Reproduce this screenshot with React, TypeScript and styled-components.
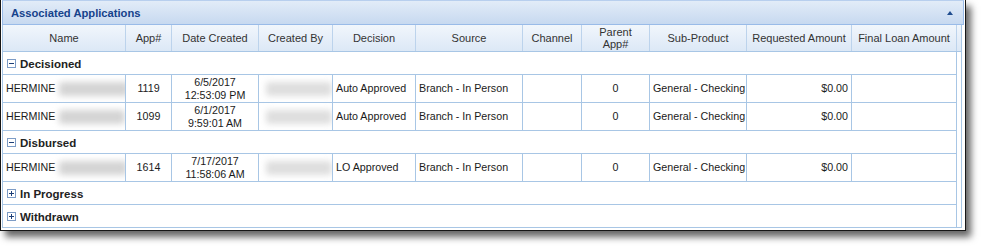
import styled, { createGlobalStyle } from 'styled-components';

type Align = 'left' | 'center' | 'right';

interface Column {
    title: string[];
    width: number;
}

interface AppRow {
    nameBlur: number;
    app: string;
    date: string;
    time: string;
    decision: string;
    source: string;
    parent: string;
    subProduct: string;
    requested: string;
}

interface Group {
    label: string;
    open: boolean;
    rows: AppRow[];
}

const columns: Column[] = [
    { title: ['Name'], width: 123 },
    { title: ['App#'], width: 46 },
    { title: ['Date Created'], width: 87 },
    { title: ['Created By'], width: 74 },
    { title: ['Decision'], width: 83 },
    { title: ['Source'], width: 107 },
    { title: ['Channel'], width: 59 },
    { title: ['Parent', 'App#'], width: 68 },
    { title: ['Sub-Product'], width: 97 },
    { title: ['Requested Amount'], width: 105 },
    { title: ['Final Loan Amount'], width: 105 },
];

const groups: Group[] = [
    {
        label: 'Decisioned',
        open: true,
        rows: [
            { nameBlur: 70, app: '1119', date: '6/5/2017', time: '12:53:09 PM', decision: 'Auto Approved', source: 'Branch - In Person', parent: '0', subProduct: 'General - Checking', requested: '$0.00' },
            { nameBlur: 66, app: '1099', date: '6/1/2017', time: '9:59:01 AM', decision: 'Auto Approved', source: 'Branch - In Person', parent: '0', subProduct: 'General - Checking', requested: '$0.00' },
        ],
    },
    {
        label: 'Disbursed',
        open: true,
        rows: [
            { nameBlur: 68, app: '1614', date: '7/17/2017', time: '11:58:06 AM', decision: 'LO Approved', source: 'Branch - In Person', parent: '0', subProduct: 'General - Checking', requested: '$0.00' },
        ],
    },
    { label: 'In Progress', open: false, rows: [] },
    { label: 'Withdrawn', open: false, rows: [] },
];

const gridTemplate = columns.map((c) => `${c.width}px`).join(' ');

// little +/- box in front of each group
const ToggleIcon = ({ open }: { open: boolean }) => (
    <svg width="9" height="9" viewBox="0 0 9 9">
        <rect x="0.5" y="0.5" width="8" height="8" fill="#fff" stroke="#7d9cc6" />
        <rect x="2" y="4" width="5" height="1" fill="#1d3f78" />
        {!open && <rect x="4" y="2" width="1" height="5" fill="#1d3f78" />}
    </svg>
);

const App = () => {
    return (
        <>
            <GlobalStyle />
            <StyledPage>
                <StyledFrame>
                    <StyledTitleBar>
                        <StyledTitle>Associated Applications</StyledTitle>
                        <StyledCollapse />
                    </StyledTitleBar>
                    <StyledBody>
                        <StyledHeaderRow $template={gridTemplate}>
                            {columns.map((c) => (
                                <StyledHeaderCell key={c.title.join(' ')}>
                                    {c.title.map((t) => (
                                        <span key={t}>{t}</span>
                                    ))}
                                </StyledHeaderCell>
                            ))}
                        </StyledHeaderRow>
                        <StyledRows>
                            {groups.map((g) => (
                                <StyledGroup key={g.label}>
                                    <StyledGroupRow>
                                        <ToggleIcon open={g.open} />
                                        <span>{g.label}</span>
                                    </StyledGroupRow>
                                    {g.rows.map((r) => (
                                        <StyledDataRow key={r.app} $template={gridTemplate}>
                                            <StyledCell $align="left">
                                                HERMINE
                                                <StyledBlur $w={r.nameBlur} />
                                            </StyledCell>
                                            <StyledCell $align="center">{r.app}</StyledCell>
                                            <StyledCell $align="center">
                                                <StyledStack>
                                                    <span>{r.date}</span>
                                                    <span>{r.time}</span>
                                                </StyledStack>
                                            </StyledCell>
                                            <StyledCell $align="left">
                                                <StyledBlur $w={66} $light />
                                            </StyledCell>
                                            <StyledCell $align="left">{r.decision}</StyledCell>
                                            <StyledCell $align="left">{r.source}</StyledCell>
                                            <StyledCell $align="left" />
                                            <StyledCell $align="center">{r.parent}</StyledCell>
                                            <StyledCell $align="left">{r.subProduct}</StyledCell>
                                            <StyledCell $align="right">{r.requested}</StyledCell>
                                            <StyledCell $align="right" />
                                        </StyledDataRow>
                                    ))}
                                </StyledGroup>
                            ))}
                        </StyledRows>
                    </StyledBody>
                </StyledFrame>
            </StyledPage>
        </>
    );
};

const GlobalStyle = createGlobalStyle`
    body {
        margin: 0;
        background: #fff;
        font-family: 'Liberation Sans', Arial, sans-serif;
    }
`;

const StyledPage = styled.div`
    width: 981px;
    height: 246px;
    overflow: hidden;
`;

const StyledFrame = styled.div`
    box-sizing: border-box;
    width: 966px;
    padding: 0 1px 2px 1px;
    background: #fff;
    border: 1px solid #161616;
    border-top: 0;
    box-shadow: 5px 6px 7px rgba(0, 0, 0, 0.6);
`;

const StyledTitleBar = styled.div`
    box-sizing: border-box;
    display: flex;
    align-items: center;
    justify-content: space-between;
    height: 25px;
    padding: 0 10px 0 8px;
    background: linear-gradient(#e2ecf8, #c7d9f0);
    border: 1px solid #99bbe8;
    border-top-color: #b8cfee;
`;

const StyledTitle = styled.span`
    font-size: 11.2px;
    font-weight: bold;
    color: #15428b;
`;

const StyledCollapse = styled.span`
    width: 0;
    height: 0;
    border-left: 3px solid transparent;
    border-right: 3px solid transparent;
    border-bottom: 4px solid #1f4d8f;
`;

const StyledBody = styled.div`
    margin-right: 2px;
    background: #fff;
    border: 1px solid #a8c6e5;
    border-top: 0;
`;

const StyledHeaderRow = styled.div<{ $template: string }>`
    box-sizing: border-box;
    display: grid;
    grid-template-columns: ${({ $template }) => $template} 1fr;
    height: 27px;
    background: linear-gradient(#f1f6fc, #dce8f6);
    border-bottom: 1px solid #a8c6e5;
`;

const StyledHeaderCell = styled.div`
    box-sizing: border-box;
    display: flex;
    flex-direction: column;
    align-items: center;
    justify-content: center;
    border-right: 1px solid #bcd3ec;
    font-size: 11px;
    line-height: 12px;
    color: #333;
`;

const StyledRows = styled.div`
    margin-right: 4px;
`;

const StyledGroup = styled.div`
    &:last-child > div:last-child {
        border-bottom: 0;
        height: 22px;
    }
`;

const StyledGroupRow = styled.div`
    box-sizing: border-box;
    display: flex;
    align-items: center;
    gap: 4px;
    height: 23px;
    padding: 1px 0 0 4px;
    border-right: 1px solid #a8c6e5;
    border-bottom: 1px solid #a8c6e5;
    font-size: 11.5px;
    font-weight: bold;
    color: #222;
`;

const StyledDataRow = styled.div<{ $template: string }>`
    box-sizing: border-box;
    display: grid;
    grid-template-columns: ${({ $template }) => $template};
    height: 28px;
    border-bottom: 1px solid #a8c6e5;
`;

const StyledCell = styled.div<{ $align: Align }>`
    box-sizing: border-box;
    display: flex;
    align-items: center;
    justify-content: ${({ $align }) =>
        $align === 'left' ? 'flex-start' : $align === 'right' ? 'flex-end' : 'center'};
    padding: 0 3px;
    overflow: hidden;
    border-right: 1px solid #a8c6e5;
    font-size: 10.7px;
    line-height: 13px;
    color: #1a1a1a;
    white-space: nowrap;
`;

const StyledStack = styled.div`
    display: flex;
    flex-direction: column;
    align-items: center;
`;

const StyledBlur = styled.span<{ $w: number; $light?: boolean }>`
    flex: none;
    width: ${({ $w }) => $w}px;
    height: 14px;
    margin-left: 4px;
    border-radius: 3px;
    background: ${({ $light }) => ($light ? '#dedede' : '#d4d4d4')};
    filter: blur(3px);
`;

export default App;
